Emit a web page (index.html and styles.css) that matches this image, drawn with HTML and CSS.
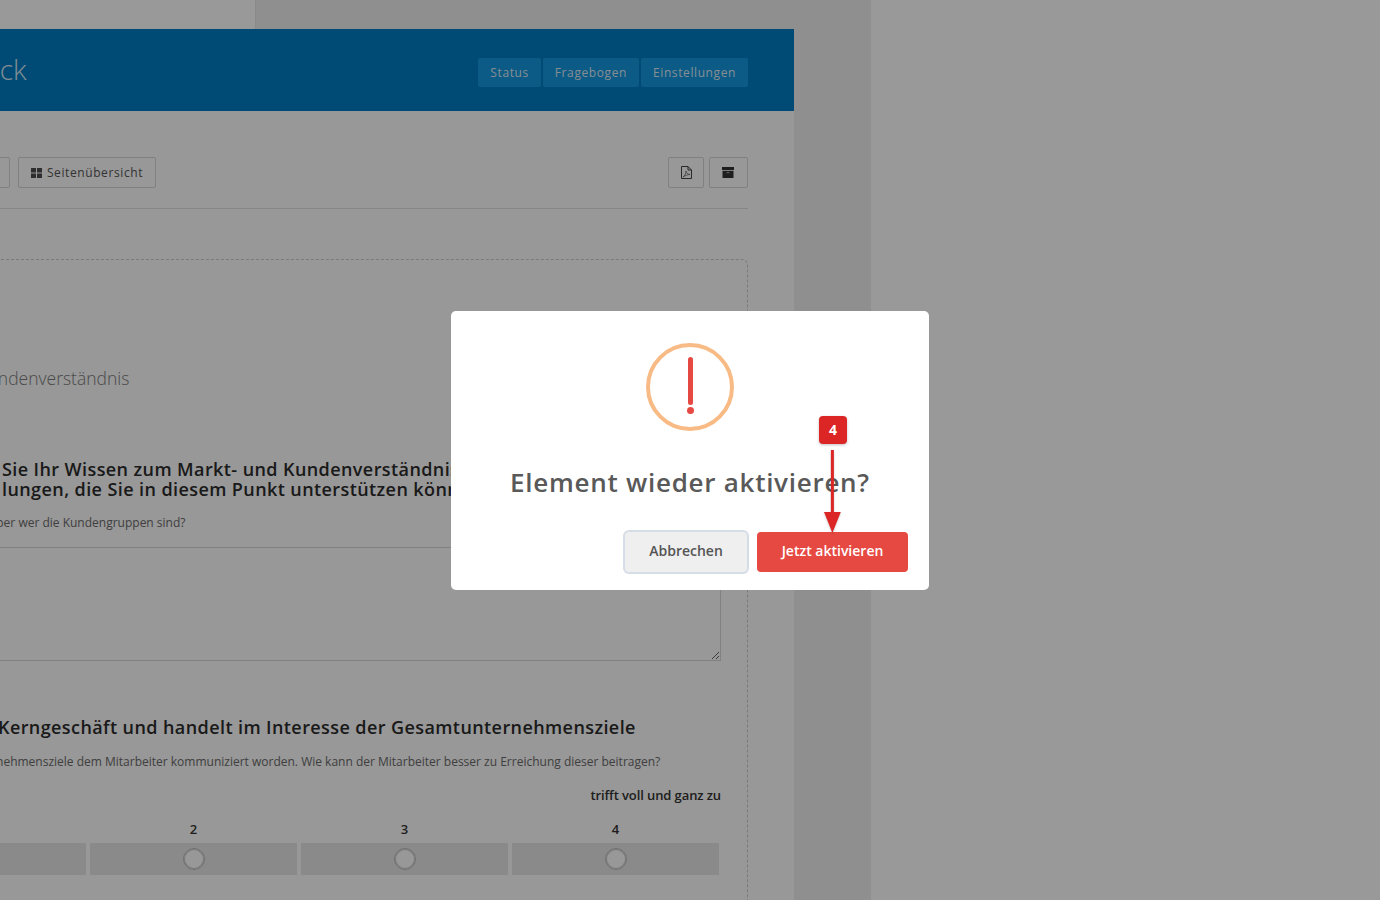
FILE: index.html
```html
<!DOCTYPE html>
<html lang="de">
<head>
<meta charset="utf-8">
<title>Feedback</title>
<link rel="stylesheet" href="styles.css">
</head>
<body>
<div class="page">
  <div class="app">
    <div class="topstrip"><div class="strip-left"></div></div>
    <main class="panel">
      <header class="header">
        <h1 class="title">Feedback</h1>
        <nav class="tabs">
          <a class="tab">Status</a>
          <a class="tab">Fragebogen</a>
          <a class="tab">Einstellungen</a>
        </nav>
      </header>
      <div class="toolbar">
        <div class="tool-left">
          <button class="btn btn-cut"></button>
          <button class="btn btn-pages">
            <svg class="ico" width="11" height="10" viewBox="0 0 11 10"><path d="M0 0h5v4.500H0zM6 0h5v4.500H6zM0 5.500h5V10H0zM6 5.500h5V10H6z" fill="#4d4d4d"/></svg>
            Seitenübersicht
          </button>
        </div>
        <div class="tool-right">
          <button class="btn btn-pdf">
            <svg width="11" height="13" viewBox="0 0 11 13"><path d="M.5.500h6.500l3.500 3.500v8.500H.5z" fill="none" stroke="#444" stroke-width="1"/><path d="M7 .5V4h3.500" fill="none" stroke="#444" stroke-width="1"/><path d="M2 11c2-1 3-4 3-6 .3 2 1.500 3 4 3.500-2 0-5 1-7 2.500z" fill="none" stroke="#666" stroke-width=".8"/></svg>
          </button>
          <button class="btn btn-archive">
            <svg width="12" height="11" viewBox="0 0 12 11"><path d="M0 0h12v3H0z" fill="#333"/><path d="M.5 3.800h11V11H.5z" fill="#333"/><path d="M4.500 5.200h3v1h-3z" fill="#aaa"/></svg>
          </button>
        </div>
      </div>
      <section class="box">
        <h2 class="section-title">Markt- und Kundenverständnis</h2>
        <h3 class="question q-one">Sie Ihr Wissen zum Markt- und Kundenverständnis<br>lungen, die Sie in diesem Punkt unterstützen können</h3>
        <p class="note note-one">darüber wer die Kundengruppen sind?</p>
        <textarea class="answer" readonly></textarea>
        <h3 class="question q-two">Kerngeschäft und handelt im Interesse der Gesamtunternehmensziele</h3>
        <p class="note note-two">Unternehmensziele dem Mitarbeiter kommuniziert worden. Wie kann der Mitarbeiter besser zu Erreichung dieser beitragen?</p>
        <div class="scale-end">trifft voll und ganz zu</div>
        <div class="scale">
          <div class="opt"><span class="num">1</span><div class="cell"><span class="radio"></span></div></div>
          <div class="opt"><span class="num">2</span><div class="cell"><span class="radio"></span></div></div>
          <div class="opt"><span class="num">3</span><div class="cell"><span class="radio"></span></div></div>
          <div class="opt"><span class="num">4</span><div class="cell"><span class="radio"></span></div></div>
        </div>
      </section>
    </main>
  </div>
</div>

<div class="overlay">
  <div class="modal">
    <div class="alert-icon"><span class="alert-bar"></span><span class="alert-dot"></span></div>
    <h2 class="modal-title">Element wieder aktivieren?</h2>
    <div class="modal-actions">
      <button class="mbtn mbtn-cancel">Abbrechen</button>
      <button class="mbtn mbtn-confirm">Jetzt aktivieren</button>
    </div>
  </div>
</div>

<div class="step-badge">4</div>
<svg class="step-arrow" width="24" height="90" viewBox="0 0 24 90"><path d="M12.400 0v66" stroke="#dc2626" stroke-width="3" fill="none"/><path d="M4 62h16.800L12.400 83z" fill="#dc2626"/></svg>
</body>
</html>
```
FILE: styles.css
```css
* { box-sizing: border-box; }
html, body { margin: 0; height: 900px; overflow: hidden; background: #fff; }
body { font-family: "Open Sans", "Liberation Sans", sans-serif; color: #333; }
h1, h2, h3, p { margin: 0; font-weight: 400; }
button { font-family: inherit; }

.page { display: flex; height: 900px; overflow: hidden; }
.app { width: 871px; flex: none; background: #eee; overflow: hidden; }
.topstrip { height: 29px; }
.strip-left { width: 256px; height: 29px; background: #fff; border-right: 1px solid #e4e4e4; }

.panel { width: 794px; height: 871px; background: #fdfdfd; padding-right: 46px; }

.header { height: 82px; margin-right: -46px; padding-right: 46px; background: #007dc3; display: flex; align-items: center; justify-content: space-between; }
.title { font-size: 28px; font-weight: 300; color: rgba(255,255,255,.85); margin-left: -92px; white-space: nowrap; letter-spacing: -.2px; position: relative; top: -1px; }
.tabs { display: flex; gap: 2px; margin-top: 5px; }
.tab { display: block; height: 29px; line-height: 29px; padding: 0 12px; background: #1496df; border-radius: 2px; font-size: 12px; letter-spacing: .6px; color: #dfecf4; }

.toolbar { display: flex; justify-content: space-between; margin-top: 46px; padding-bottom: 20px; border-bottom: 1px solid #e0e0e0; height: 52px; }
.tool-left, .tool-right { display: flex; }
.tool-left { gap: 8px; margin-left: -40px; }
.tool-right { gap: 5px; }
.btn { height: 31px; padding: 0; background: transparent; border: 1px solid #d6d6d6; border-radius: 2px; display: flex; align-items: center; justify-content: center; color: #555; }
.btn-cut { width: 50px; }
.btn-pages { width: 138px; font-size: 12px; letter-spacing: .6px; gap: 5px; }
.btn-pdf { width: 36px; }
.btn-archive { width: 39px; padding-right: 2px; }

.box { height: 800px; margin: 50px 0 0 -40px; padding-right: 26px; border: 1px dashed #ccc; border-radius: 6px; }
.section-title { font-size: 17.500px; font-weight: 300; line-height: 24px; color: #7c7c7c; margin: 106px 0 0 -75px; white-space: nowrap; }
.question { font-size: 18px; font-weight: 600; line-height: 20px; letter-spacing: .41px; color: #2c2c2c; white-space: nowrap; }
.q-one { margin: 69px 0 0 41px; }
.note { font-size: 12px; line-height: 18px; color: #6a6a6a; white-space: nowrap; }
.note-one { margin: 15px 0 0 9px; }
.answer { display: block; width: 760px; height: 114px; margin: 15px 0 0 0; border: 1px solid #d8d8d8; border-radius: 0; background: transparent; outline: none; }
.q-two { margin: 56px 0 0 37px; }
.note-two { margin: 16px 0 0 3px; }
.scale-end { margin-top: 15px; text-align: right; font-size: 13px; font-weight: 600; letter-spacing: -.1px; line-height: 18px; color: #333; }
.scale { display: flex; gap: 4px; margin: 16px 2px 0 -100px; justify-content: flex-end; }
.opt { width: 207px; flex: none; display: flex; flex-direction: column; align-items: center; }
.num { font-size: 13px; font-weight: 600; line-height: 18px; color: #333; margin-bottom: 5px; }
.cell { width: 100%; height: 32px; background: #e6e6e6; display: flex; align-items: center; justify-content: center; }
.radio { width: 22px; height: 22px; border-radius: 50%; border: 1px solid #bbb; background: #fdfdfd; box-shadow: inset 0 0 0 1px #ccc; }

.overlay { position: fixed; inset: 0; background: rgba(0,0,0,.4); display: flex; align-items: center; justify-content: center; }
.modal { width: 478px; height: 279px; background: #fff; border-radius: 5px; padding-top: 32px; display: flex; flex-direction: column; align-items: center; }
.alert-icon { position: relative; width: 88px; height: 88px; border: 4px solid #f8bb86; border-radius: 50%; flex: none; }
.alert-bar { position: absolute; left: 38px; top: 10px; width: 5px; height: 48px; background: #e64942; border-radius: 3px; }
.alert-dot { position: absolute; left: 37px; top: 60px; width: 7px; height: 7px; background: #e64942; border-radius: 50%; }
.modal-title { margin-top: 32px; font-size: 26px; font-weight: 600; line-height: 38px; letter-spacing: .73px; color: #595959; white-space: nowrap; }
.modal-actions { align-self: stretch; display: flex; justify-content: flex-end; gap: 10px; margin-top: 31px; padding-right: 21px; }
.mbtn { height: 40px; border: 0; border-radius: 4px; font-size: 14px; font-weight: 600; padding: 0 0 2px; }
.mbtn-cancel { width: 122px; background: #efefef; color: #555; box-shadow: 0 0 0 2px #d6dde6; }
.mbtn-confirm { width: 151px; background: #e64942; color: #fff; }

.step-badge { position: fixed; left: 819px; top: 416px; width: 28px; height: 28px; background: #dc2626; border-radius: 4px; color: #fff; font-size: 14px; font-weight: 700; line-height: 28px; text-align: center; box-shadow: 0 1px 3px rgba(0,0,0,.25); }
.step-arrow { position: fixed; left: 820px; top: 450px; filter: drop-shadow(0 1px 1px rgba(0,0,0,.2)); }
```
